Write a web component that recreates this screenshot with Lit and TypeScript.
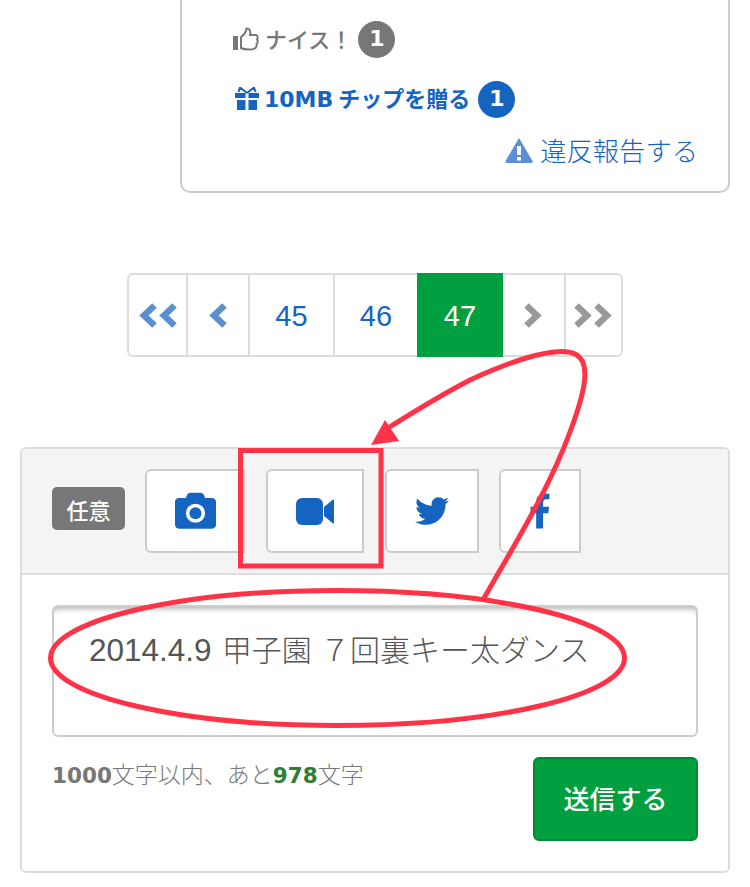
import { LitElement, html, css, svg } from "lit";
import { customElement } from "lit/decorators.js";

const chevron = (left: boolean) => html`<svg class="chev" width="18" height="25" viewBox="0 0 18 25">
  <polyline points=${left ? "15.5,2.5 5,12.5 15.5,22.5" : "2.5,2.5 13,12.5 2.5,22.5"} fill="none" stroke="currentColor" stroke-width="6.5"></polyline>
</svg>`;

const overlay = svg`
  <rect x="240.5" y="450.5" width="140.5" height="115.5" fill="none" stroke="#ff3347" stroke-width="5"></rect>
  <ellipse cx="337.5" cy="658" rx="287" ry="67.5" fill="none" stroke="#ff3347" stroke-width="5"></ellipse>
  <path d="M483 600 C510 552 548 492 570 432 C585 392 592 362 575 354 C555 344 500 366 470 380 C445 393 415 411 388 428" fill="none" stroke="#ff3347" stroke-width="5"></path>
  <polygon points="371,445 385,420 399,441" fill="#ff3347"></polygon>
`;

@customElement("app-root")
export class AppRoot extends LitElement {
  static styles = css`
    :host {
      display: block;
      position: relative;
      width: 750px;
      height: 887px;
      overflow: hidden;
      background: #fff;
      font-family: "Liberation Sans", "Noto Sans CJK JP", sans-serif;
      color: #555;
    }
    .card {
      box-sizing: border-box;
      width: 550px;
      height: 193px;
      margin-left: 180px;
      padding: 21px 30px 0 51px;
      border: 2px solid #ccc;
      border-top: 0;
      border-radius: 0 0 10px 10px;
      display: flex;
      flex-direction: column;
    }
    .row {
      display: flex;
      align-items: center;
      height: 36px;
      font-family: "Noto Sans CJK JP", sans-serif;
      font-size: 22px;
      font-weight: 500;
      line-height: 34px;
      white-space: nowrap;
    }
    .row .t { padding-bottom: 2px; }
    .row .wide { font-family: "DejaVu Sans", sans-serif; font-weight: 700; }
    .row.nice { color: #777; }
    .row.tip { color: #1565c0; margin-top: 24px; font-weight: 700; }
    .row svg { flex: none; }
    .nice svg { margin-right: 6px; }
    .tip svg { margin: 0 5px 0 2px; }
    .count {
      flex: none;
      width: 37px;
      height: 37px;
      border-radius: 50%;
      margin-left: 6px;
      display: flex;
      align-items: center;
      justify-content: center;
      color: #fff;
      background: #777;
      font-family: "DejaVu Sans", sans-serif;
      font-size: 22px;
      font-weight: 700;
      line-height: 1;
    }
    .tip .count { background: #1565c0; margin-left: 8px; }
    .report {
      align-self: flex-end;
      display: flex;
      align-items: center;
      margin-top: 13px;
      height: 40px;
      color: #1565c0;
      font-family: "Noto Sans CJK JP", sans-serif;
      font-size: 26.3px;
      font-weight: 300;
      line-height: 40px;
      white-space: nowrap;
    }
    .report svg { margin-right: 7px; }
    .pager {
      box-sizing: border-box;
      width: 496px;
      height: 84px;
      margin: 80px auto 0;
      border: 2px solid #ddd;
      border-radius: 6px;
      display: grid;
      grid-template-columns: 57px 62px 85px 84px 86px 61px 1fr;
    }
    .cell {
      display: flex;
      align-items: center;
      justify-content: center;
      gap: 2px;
      border-left: 2px solid #ddd;
      color: #1565c0;
      font-size: 29px;
      padding-top: 2px;
    }
    .cell.first { border-left: 0; }
    .cell.light { color: #5a8fd2; padding-top: 0; }
    .cell.off { color: #999; padding: 0 2px 0 0; }
    .cell.plain { border-left: 0; }
    .cell.on {
      border-left: 0;
      margin: -2px 0;
      background: #00a040;
      color: #fff;
    }
    .panel {
      box-sizing: border-box;
      height: 426px;
      margin: 90px 20px 0;
      border: 2px solid #ddd;
      border-radius: 6px;
    }
    .head {
      box-sizing: border-box;
      height: 126px;
      padding-left: 30px;
      background: #f4f4f4;
      border-bottom: 2px solid #ddd;
      border-radius: 4px 4px 0 0;
      display: flex;
      align-items: center;
    }
    .tag {
      width: 73px;
      height: 43px;
      margin: 0 20px 5px 0;
      border-radius: 5px;
      background: #777;
      color: #fff;
      display: flex;
      align-items: center;
      justify-content: center;
      font-family: "Noto Sans CJK JP", sans-serif;
      font-size: 22px;
      font-weight: 500;
    }
    .tool {
      box-sizing: border-box;
      height: 84px;
      margin-right: 21px;
      border: 2px solid #ccc;
      border-radius: 6px 0 0 6px;
      background: #fff;
      color: #1565c0;
      display: flex;
      align-items: center;
      justify-content: center;
    }
    .w-cam { width: 100px; }
    .w-vid { width: 98px; }
    .w-tw { width: 94px; margin-right: 20px; }
    .w-fb { width: 82px; }
    .body { padding: 30px 30px 0; }
    .input {
      box-sizing: border-box;
      height: 132px;
      padding: 23px 0 0 35px;
      border: 2px solid #ccc;
      border-radius: 6px;
      box-shadow: inset 0 6px 5px -4px rgba(0, 0, 0, 0.3);
      color: #555;
      font-family: "Noto Sans CJK JP", sans-serif;
      font-size: 30px;
      font-weight: 300;
      line-height: 36px;
      white-space: nowrap;
      word-spacing: 1.5px;
    }
    .input .num { font-family: "Liberation Sans", sans-serif; font-size: 31.5px; font-weight: 400; }
    .foot {
      display: flex;
      justify-content: space-between;
      align-items: flex-start;
      margin-top: 20px;
    }
    .hint {
      color: #777;
      font-family: "Noto Sans CJK JP", sans-serif;
      font-size: 23px;
      font-weight: 300;
      line-height: 32px;
      white-space: nowrap;
    }
    .hint b { font-family: "DejaVu Sans", sans-serif; font-size: 21.5px; font-weight: 700; }
    .hint .left { color: #2e7d32; }
    .send {
      box-sizing: border-box;
      width: 165px;
      height: 84px;
      padding-bottom: 4px;
      border: 2px solid #008a35;
      border-radius: 6px;
      background: #00a040;
      color: #fff;
      display: flex;
      align-items: center;
      justify-content: center;
      font-family: "Noto Sans CJK JP", sans-serif;
      font-size: 26px;
      font-weight: 500;
    }
    .marks {
      position: absolute;
      inset: 0;
      pointer-events: none;
    }
  `;

  render() {
    return html`
      <div class="card">
        <div class="row nice">
          <svg width="26" height="24" viewBox="0 0 26 24">
            <rect x="0" y="9" width="5" height="14" fill="#777"></rect>
            <path d="M8 10 C11 8 13 5 13.5 1.5 C16 1 18 3 17 8 L23 8 C25 8 25 11 24 12.5 C25 14 25 16 23.5 17 C24 19 23 21 21.5 21.5 C19 23 12 23 8 21 Z" fill="none" stroke="#777" stroke-width="2"></path>
          </svg>
          <span class="t">ナイス！</span>
          <span class="count">1</span>
        </div>
        <div class="row tip">
          <svg width="24" height="24" viewBox="0 0 24 24" fill="#1565c0">
            <rect x="0" y="6" width="10.5" height="5"></rect>
            <rect x="13.5" y="6" width="10.5" height="5"></rect>
            <rect x="2" y="13" width="8.5" height="10"></rect>
            <rect x="13.5" y="13" width="8.5" height="10"></rect>
            <path d="M12 6 L5 0.5 L3.5 5 M12 6 L19 0.5 L20.5 5" fill="none" stroke="#1565c0" stroke-width="2"></path>
          </svg>
          <span class="t"><span class="wide">10MB</span> チップを贈る</span>
          <span class="count">1</span>
        </div>
        <div class="report">
          <svg width="28" height="26" viewBox="0 0 28 26">
            <path d="M14 1 L27.5 24 Q28 26 26 26 L2 26 Q0 26 .5 24 Z" fill="#5a8fd2"></path>
            <rect x="12" y="9" width="4" height="9" fill="#fff"></rect>
            <rect x="12" y="20" width="4" height="3.5" fill="#fff"></rect>
          </svg>
          <span>違反報告する</span>
        </div>
      </div>

      <nav class="pager">
        <div class="cell first light">${chevron(true)}${chevron(true)}</div>
        <div class="cell light">${chevron(true)}</div>
        <div class="cell">45</div>
        <div class="cell">46</div>
        <div class="cell on">47</div>
        <div class="cell plain off">${chevron(false)}</div>
        <div class="cell off">${chevron(false)}${chevron(false)}</div>
      </nav>

      <section class="panel">
        <div class="head">
          <div class="tag">任意</div>
          <div class="tool w-cam">
            <svg width="41" height="41" viewBox="0 0 512 512" fill="currentColor">
              <path d="M512 144v288c0 26.5-21.5 48-48 48H48c-26.5 0-48-21.5-48-48V144c0-26.5 21.5-48 48-48h88l12.3-32.9c7-18.7 24.9-31.1 44.9-31.1h125.5c20 0 37.9 12.4 44.9 31.1L376 96h88c26.5 0 48 21.5 48 48z" transform="translate(0 -10)"></path>
              <circle cx="256" cy="278" r="120" fill="#fff"></circle>
              <circle cx="256" cy="278" r="75" fill="currentColor"></circle>
            </svg>
          </div>
          <div class="tool w-vid">
            <svg width="38" height="27" viewBox="0 0 38 27" fill="currentColor">
              <rect x="0" y="0" width="27" height="27" rx="6"></rect>
              <path d="M28 9 L37 1.5 Q38 1 38 2.5 L38 25 Q38 26 37 25.5 L28 18 Z"></path>
            </svg>
          </div>
          <div class="tool w-tw">
            <svg width="34" height="34" viewBox="0 0 512 512" fill="currentColor">
              <path d="M459.37 151.716c.325 4.548.325 9.097.325 13.645 0 138.72-105.583 298.558-298.558 298.558-59.452 0-114.68-17.219-161.137-47.106 8.447.974 16.568 1.299 25.34 1.299 49.055 0 94.213-16.568 130.274-44.832-46.132-.975-84.792-31.188-98.112-72.772 6.498.974 12.995 1.624 19.818 1.624 9.421 0 18.843-1.3 27.614-3.573-48.081-9.747-84.143-51.98-84.143-102.985v-1.299c13.969 7.797 30.214 12.67 47.431 13.319-28.264-18.843-46.781-51.005-46.781-87.391 0-19.492 5.197-37.36 14.294-52.954 51.655 63.675 129.3 105.258 216.365 109.807-1.624-7.797-2.599-15.918-2.599-24.04 0-57.828 46.782-104.934 104.934-104.934 30.213 0 57.502 12.67 76.67 33.137 23.715-4.548 46.456-13.645 66.599-25.34-7.798 24.366-24.366 44.833-46.132 57.827 21.117-2.273 41.584-8.122 60.426-16.243-14.292 20.791-32.161 39.308-52.628 54.253z"></path>
            </svg>
          </div>
          <div class="tool w-fb">
            <svg width="22" height="36" viewBox="0 0 320 512" fill="currentColor">
              <path d="M279.14 288l14.22-92.66h-88.91v-60.13c0-25.35 12.42-50.06 52.24-50.06h40.42V6.26S260.43 0 225.36 0c-73.22 0-121.08 44.38-121.08 124.72v70.62H22.89V288h81.39v224h100.17V288z"></path>
            </svg>
          </div>
        </div>
        <div class="body">
          <div class="input"><span class="num">2014.4.9 </span>甲子園 ７回裏キー太ダンス</div>
          <div class="foot">
            <div class="hint"><b>1000</b>文字以内、あと<b class="left">978</b>文字</div>
            <div class="send">送信する</div>
          </div>
        </div>
      </section>

      <svg class="marks" width="750" height="887" viewBox="0 0 750 887">${overlay}</svg>
    `;
  }
}
